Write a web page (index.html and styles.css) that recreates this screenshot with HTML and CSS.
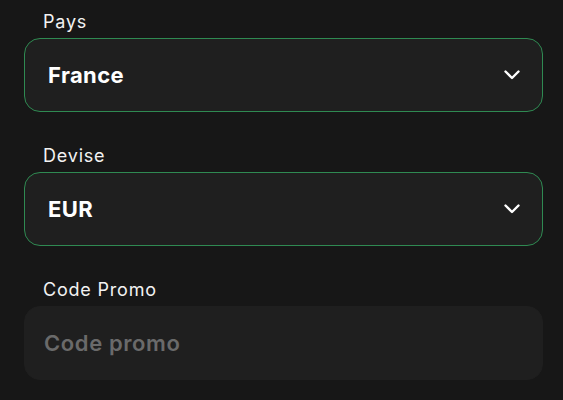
FILE: index.html
```html
<!DOCTYPE html>
<html lang="fr">
<head>
<meta charset="utf-8">
<title>Formulaire</title>
<link rel="stylesheet" href="styles.css">
</head>
<body>
<form class="form">
  <div class="field">
    <label class="label">Pays</label>
    <div class="control select">
      <span class="value">France</span>
      <svg class="chevron" viewBox="0 0 16 10" width="16" height="10"><path d="M1.5 1.5 L8 8 L14.5 1.5" fill="none" stroke="#ffffff" stroke-width="2.4" stroke-linecap="round" stroke-linejoin="round"/></svg>
    </div>
  </div>
  <div class="field">
    <label class="label">Devise</label>
    <div class="control select">
      <span class="value">EUR</span>
      <svg class="chevron" viewBox="0 0 16 10" width="16" height="10"><path d="M1.5 1.5 L8 8 L14.5 1.5" fill="none" stroke="#ffffff" stroke-width="2.4" stroke-linecap="round" stroke-linejoin="round"/></svg>
    </div>
  </div>
  <div class="field">
    <label class="label">Code Promo</label>
    <div class="control input">
      <span class="placeholder">Code promo</span>
    </div>
  </div>
</form>
</body>
</html>
```

FILE: styles.css
```css
html, body {
  margin: 0;
  padding: 0;
  background: #171717;
}
body {
  font-family: Inter, "Open Sans", sans-serif;
  color: #ffffff;
  width: 563px;
  height: 400px;
  overflow: hidden;
}
.form {
  display: flex;
  flex-direction: column;
  gap: 32px;
  padding: 10px 20px 0 24px;
}
.field {
  display: flex;
  flex-direction: column;
  gap: 4px;
}
.label {
  font-size: 18px;
  line-height: 24px;
  font-weight: 400;
  letter-spacing: 0.8px;
  padding-left: 19px;
  color: #f2f2f2;
}
.control {
  box-sizing: border-box;
  height: 74px;
  border-radius: 16px;
  background: #1f1f1f;
  display: flex;
  align-items: center;
  justify-content: space-between;
  padding: 0 22px 0 23px;
}
.select {
  border: 1px solid #2f8a52;
}
.input {
  border: 1px solid #1f1f1f;
  padding-left: 19px;
}
.value {
  font-size: 22px;
  font-weight: 700;
  letter-spacing: 0.4px;
  color: #ffffff;
}
.placeholder {
  font-size: 22px;
  font-weight: 600;
  letter-spacing: 0.6px;
  color: #6a6a6a;
}
.chevron {
  display: block;
}
```
